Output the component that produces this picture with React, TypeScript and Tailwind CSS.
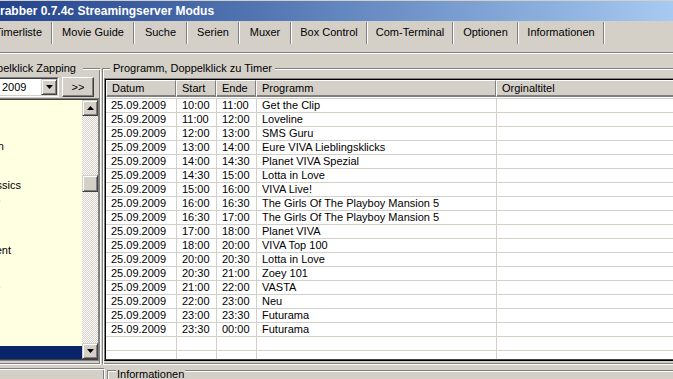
import React from 'react';

const tabs = [
  { label: 'Movie Guide', w: 'w-[80px]' },
  { label: 'Suche', w: 'w-[51px]' },
  { label: 'Serien', w: 'w-[50px]' },
  { label: 'Muxer', w: 'w-[50px]' },
  { label: 'Box Control', w: 'w-[74px]' },
  { label: 'Com-Terminal', w: 'w-[84px]' },
  { label: 'Optionen', w: 'w-[63px]' },
  { label: 'Informationen', w: 'w-[84px]' },
];

// channel names, cut off at the left edge of the window
const channels = [
  { name: 'Das Erste', w: 'w-0' },
  { name: 'ZDF', w: 'w-0' },
  { name: 'RTL', w: 'w-0' },
  { name: 'Nickelodeon', w: 'w-[4px]' },
  { name: 'SAT.1', w: 'w-0' },
  { name: 'ProSieben', w: 'w-0' },
  { name: 'VH1 Classics', w: 'w-[21px]' },
  { name: 'VIVA', w: 'w-0' },
  { name: 'kabel eins', w: 'w-0' },
  { name: 'DMAX', w: 'w-0' },
  { name: 'TELE 5', w: 'w-0' },
  { name: 'MTV Entertainment', w: 'w-[11px]' },
  { name: 'VOX', w: 'w-0' },
  { name: 'RTL2', w: 'w-0' },
  { name: 'n-tv', w: 'w-0' },
  { name: 'N24', w: 'w-0' },
  { name: '3sat', w: 'w-0' },
  { name: 'arte', w: 'w-0' },
];

const programs = [
  ['10:00', '11:00', 'Get the Clip'],
  ['11:00', '12:00', 'Loveline'],
  ['12:00', '13:00', 'SMS Guru'],
  ['13:00', '14:00', 'Eure VIVA Lieblingsklicks'],
  ['14:00', '14:30', 'Planet VIVA Spezial'],
  ['14:30', '15:00', 'Lotta in Love'],
  ['15:00', '16:00', 'VIVA Live!'],
  ['16:00', '16:30', 'The Girls Of The Playboy Mansion 5'],
  ['16:30', '17:00', 'The Girls Of The Playboy Mansion 5'],
  ['17:00', '18:00', 'Planet VIVA'],
  ['18:00', '20:00', 'VIVA Top 100'],
  ['20:00', '20:30', 'Lotta in Love'],
  ['20:30', '21:00', 'Zoey 101'],
  ['21:00', '22:00', 'VASTA'],
  ['22:00', '23:00', 'Neu'],
  ['23:00', '23:30', 'Futurama'],
  ['23:30', '00:00', 'Futurama'],
];

const raised =
  'bg-[#d4d0c8] border border-t-white border-l-white border-r-[#404040] border-b-[#404040] shadow-[inset_-1px_-1px_0_#808080]';
const scrollBtn =
  'bg-[#d4d0c8] border border-t-[#d4d0c8] border-l-[#d4d0c8] border-r-[#404040] border-b-[#404040] shadow-[inset_1px_1px_0_#fff,inset_-1px_-1px_0_#808080] flex items-center justify-center';

const Sep = () => <div className="w-[2px] mt-px border-l border-[#808080] bg-white" />;

const Arrow = ({ up }: { up?: boolean }) => (
  <svg width="7" height="4" viewBox="0 0 7 4">
    <polygon points={up ? '3.5,0 7,4 0,4' : '0,0 7,0 3.5,4'} fill="#000" />
  </svg>
);

const hdrCell =
  'border-t border-l border-white border-r border-r-[#808080] border-b border-b-[#808080] shadow-[inset_0_-1px_0_#808080] pl-[5px] flex items-center whitespace-nowrap';
const rowCell = 'border-r border-[#d4d0c8] pl-[5px] whitespace-nowrap overflow-hidden';

const ListView = () => (
  <div className="flex-1 min-h-0 border-t border-l border-b border-t-[#808080] border-l-[#808080] border-b-black">
    <div className="h-full border-t border-l border-b border-black border-b-[#404040] bg-white overflow-hidden flex flex-col">
      <div className="flex h-[17px] shrink-0 bg-[#d4d0c8]">
        <div className={`w-[70px] ${hdrCell}`}>Datum</div>
        <div className={`w-[40px] ${hdrCell}`}>Start</div>
        <div className={`w-[40px] ${hdrCell}`}>Ende</div>
        <div className={`w-[240px] ${hdrCell}`}>Programm</div>
        <div className={`flex-1 ${hdrCell}`}>Orginaltitel</div>
      </div>
      <div className="pt-px">
        {[...programs, ['', '', ''], ['', '', '']].map((p, i) => (
          <div key={i} className="flex h-[14px] border-t border-[#d4d0c8]">
            <div className={`w-[71px] ${rowCell}`}>{p[0] ? '25.09.2009' : ''}</div>
            <div className={`w-[40px] ${rowCell}`}>{p[0]}</div>
            <div className={`w-[40px] ${rowCell}`}>{p[1]}</div>
            <div className={`w-[240px] ${rowCell}`}>{p[2]}</div>
            <div className={`flex-1 ${rowCell}`}></div>
          </div>
        ))}
      </div>
    </div>
  </div>
);

export default function App() {
  return (
    <div className="w-[673px] h-[379px] overflow-hidden bg-[#d4d0c8] font-['Liberation_Sans',Arial,sans-serif] text-[11px] leading-[13px] text-black select-none">
      <div className="h-px bg-[#d4d0c8]" />
      {/* title bar */}
      <div className="h-[20px] flex items-center bg-linear-to-r from-[#24438c] to-[#a6caf0] text-white font-bold text-[12px] whitespace-nowrap">
        rabber 0.7.4c Streamingserver Modus
      </div>

      {/* toolbar tabs */}
      <div className="h-[23px] flex">
        <div className="w-[51px] flex items-center justify-end pr-[9px] whitespace-nowrap">Timerliste</div>
        <Sep />
        {tabs.map((t) => (
          <React.Fragment key={t.label}>
            <div className={`${t.w} flex items-center justify-center whitespace-nowrap`}>{t.label}</div>
            <Sep />
          </React.Fragment>
        ))}
      </div>
      <div className="h-[8px]" />
      <div className="h-[2px] border-t border-[#808080] bg-white" />

      {/* group boxes */}
      <div className="mt-[14px] flex h-[297px]">
        <div className="relative w-[101px] shrink-0 border-t border-r border-b border-t-[#808080] border-r-white border-b-white shadow-[inset_0_1px_0_#fff,inset_-1px_-1px_0_#808080] pt-[8px]">
          <div className="absolute -top-[7px] right-[17px] pl-[3px] pr-[7px] bg-[#d4d0c8] whitespace-nowrap">
            Doppelklick Zapping
          </div>
          <div className="flex">
            <div className="w-[59px] h-[20px] bg-white border-t border-r border-b border-t-[#808080] border-r-white border-b-white flex">
              <div className="flex-1 flex items-center pl-[2px] border-t border-r border-b border-t-[#404040] border-r-[#d4d0c8] border-b-[#d4d0c8]">
                <span className="flex-1">2009</span>
                <div className={`w-[16px] h-[16px] ${scrollBtn}`}>
                  <Arrow />
                </div>
              </div>
            </div>
            <div className={`ml-[3px] w-[32px] h-[20px] flex items-center justify-center ${raised}`}>&gt;&gt;</div>
          </div>
          <div className="mt-px w-[99px] h-[263px] border-t border-r border-b border-[#808080] flex">
            <div className="flex-1 flex border-t border-b border-[#404040]">
              <div className="flex-1 flex flex-col bg-[#ffffe1] pt-px">
                {channels.map((c) => (
                  <div key={c.name} className={`${c.w} h-[13px] flex justify-end whitespace-nowrap`}>
                    {c.name}
                  </div>
                ))}
                <div className="mt-auto h-[13px] bg-[#0a246a] text-white whitespace-nowrap flex">
                  <div className="w-0 min-w-0 shrink-0 flex justify-end">Super RTL</div>
                </div>
              </div>
              <div className="w-[16px] flex flex-col">
                <div className={`h-[16px] ${scrollBtn}`}>
                  <Arrow up />
                </div>
                <div className="h-[59px] bg-[image:repeating-conic-gradient(#d4d0c8_0%_25%,#ffffff_0%_50%)] bg-[length:2px_2px]" />
                <div className={`h-[17px] ${scrollBtn}`} />
                <div className="flex-1 bg-[image:repeating-conic-gradient(#d4d0c8_0%_25%,#ffffff_0%_50%)] bg-[length:2px_2px]" />
                <div className={`h-[16px] ${scrollBtn}`}>
                  <Arrow />
                </div>
              </div>
            </div>
          </div>
        </div>

        <div className="relative ml-px w-[620px] shrink-0 border-t border-l border-b border-t-[#808080] border-l-[#808080] border-b-white shadow-[inset_1px_1px_0_#fff,inset_0_-1px_0_#808080] pt-[9px] pl-px pb-[3px] flex flex-col">
          <div className="absolute -top-[7px] left-[7px] px-[3px] bg-[#d4d0c8] whitespace-nowrap">
            Programm, Doppelklick zu Timer
          </div>
          <ListView />
        </div>
      </div>

      {/* lower group boxes */}
      <div className="flex pt-[3px]">
        <div className="w-[105px] h-[20px] shrink-0 border-t border-r border-t-[#808080] border-r-white shadow-[inset_0_1px_0_#fff,inset_-1px_0_0_#808080]" />
        <div className="relative ml-[2px] mt-[2px] w-[600px] h-[20px] shrink-0 border-t border-l border-[#808080] shadow-[inset_1px_1px_0_#fff]">
          <div className="absolute -top-[3px] left-[8px] px-px bg-[#d4d0c8] whitespace-nowrap">Informationen</div>
        </div>
      </div>
    </div>
  );
}
